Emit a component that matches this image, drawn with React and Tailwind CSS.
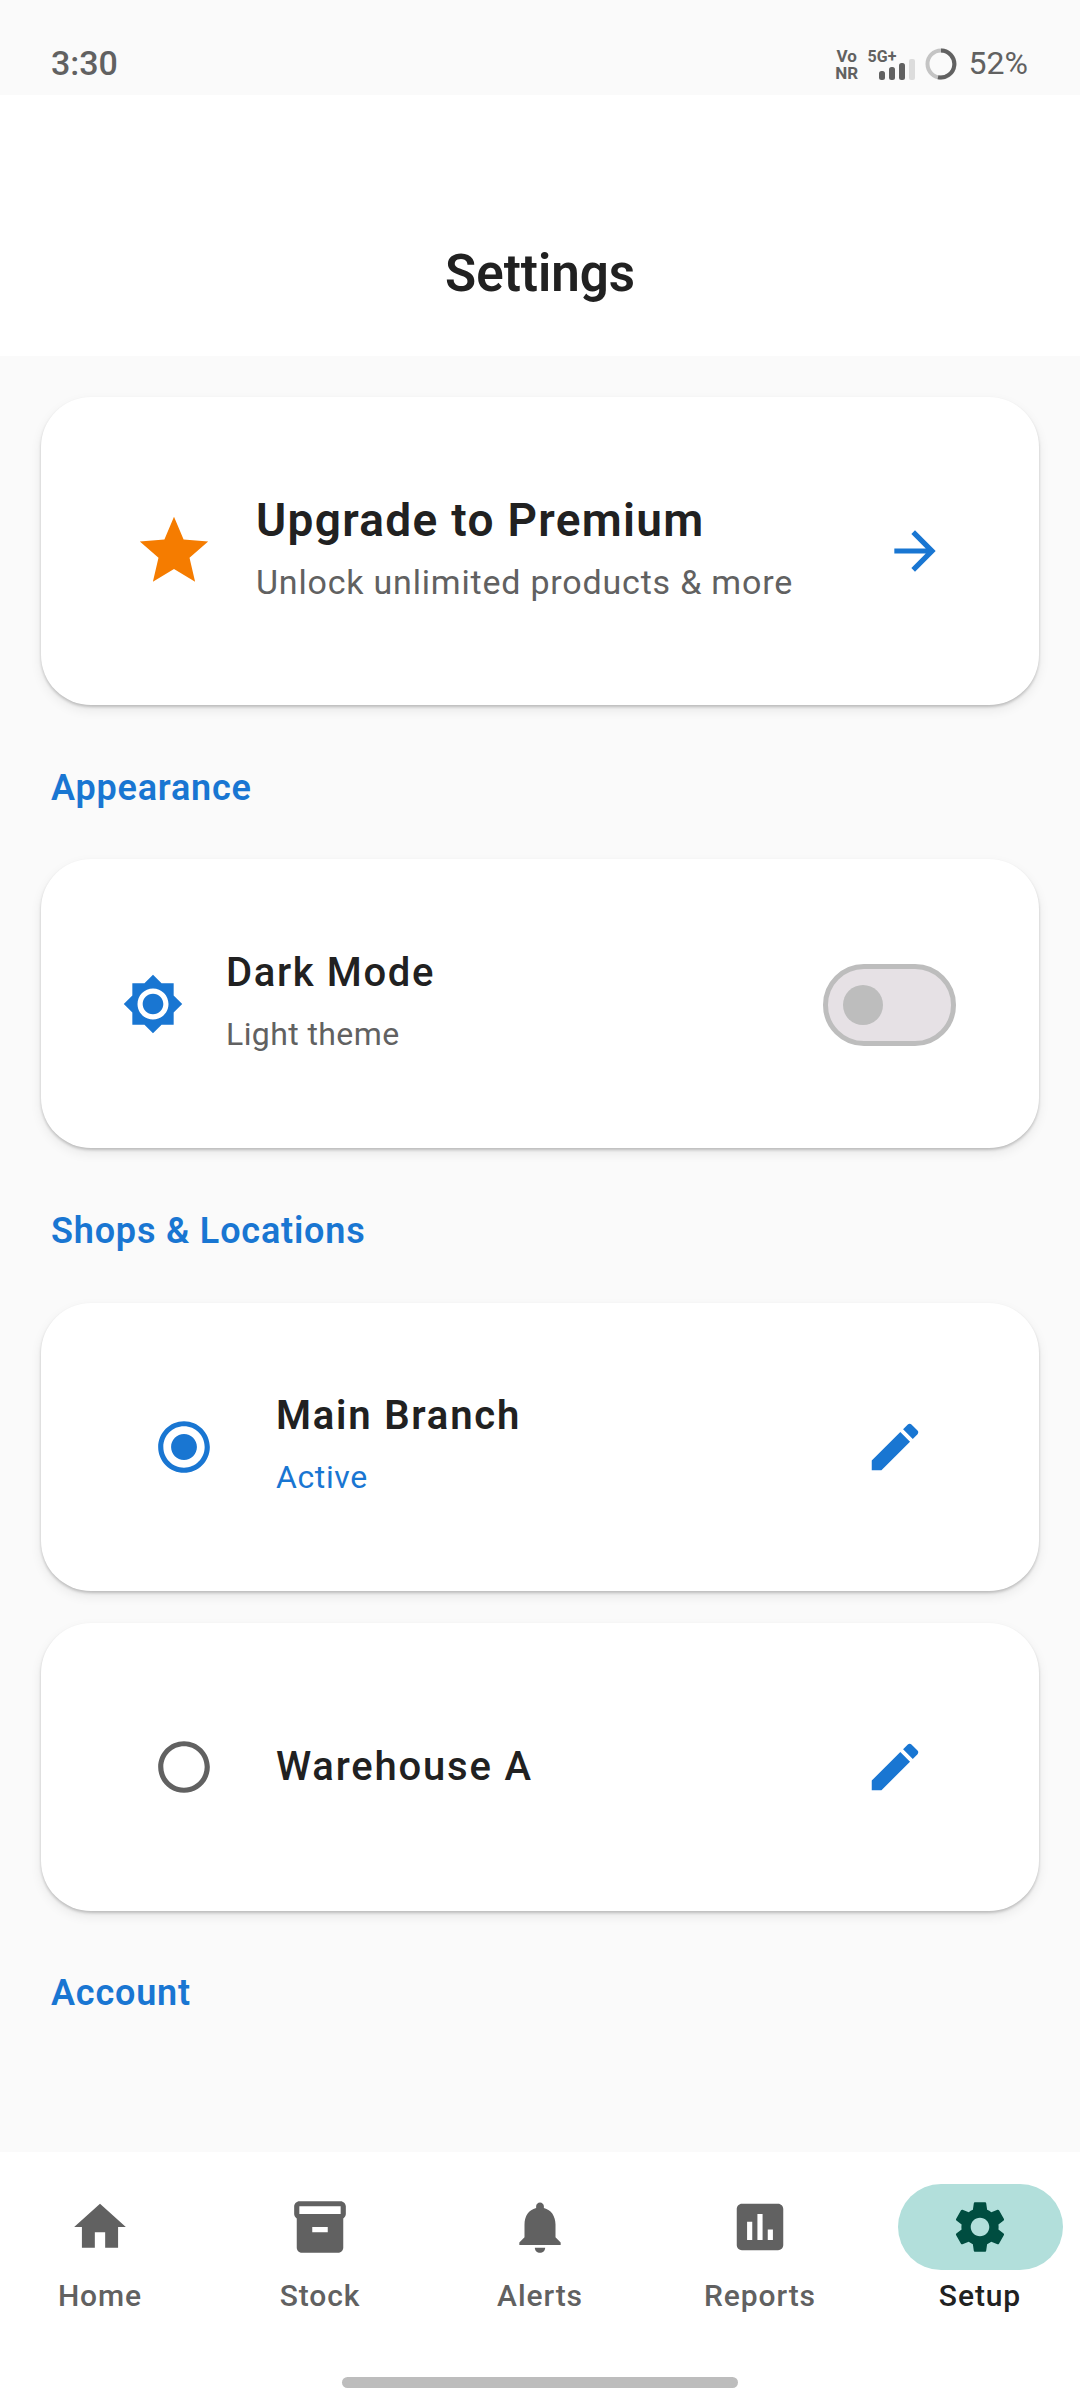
const paths = {
  star: 'M12 17.27L18.18 21l-1.64-7.03L22 9.24l-7.19-.61L12 2 9.19 8.63 2 9.24l5.46 4.73L5.82 21z',
  arrow: 'M12 4l-1.41 1.41L16.17 11H4v2h12.17l-5.58 5.59L12 20l8-8z',
  brightness: 'M20 8.69V4h-4.69L12 .69 8.69 4H4v4.69L.69 12 4 15.31V20h4.69L12 23.31 15.31 20H20v-4.69L23.31 12 20 8.69zM12 18c-3.31 0-6-2.69-6-6s2.69-6 6-6 6 2.69 6 6-2.69 6-6 6zm0-10c-2.21 0-4 1.79-4 4s1.79 4 4 4 4-1.79 4-4-1.79-4-4-4z',
  edit: 'M3 17.25V21h3.75L17.81 9.94l-3.75-3.75L3 17.25zM20.71 7.04c.39-.39.39-1.02 0-1.41l-2.34-2.34c-.39-.39-1.02-.39-1.41 0l-1.83 1.83 3.75 3.75 1.83-1.83z',
  radioOn: 'M12 7c-2.76 0-5 2.24-5 5s2.24 5 5 5 5-2.24 5-5-2.24-5-5-5zm0-5C6.48 2 2 6.48 2 12s4.48 10 10 10 10-4.48 10-10S17.52 2 12 2zm0 18c-4.42 0-8-3.58-8-8s3.58-8 8-8 8 3.58 8 8-3.58 8-8 8z',
  radioOff: 'M12 2C6.48 2 2 6.48 2 12s4.48 10 10 10 10-4.48 10-10S17.52 2 12 2zm0 18c-4.42 0-8-3.58-8-8s3.58-8 8-8 8 3.58 8 8-3.58 8-8 8z',
  home: 'M10 20v-6h4v6h5v-8h3L12 3 2 12h3v8z',
  stock: 'M20 2H4c-1 0-2 .9-2 2v3.01c0 .72.43 1.34 1 1.69V20c0 1.1 1.1 2 2 2h14c.9 0 2-.9 2-2V8.7c.57-.35 1-.97 1-1.69V4c0-1.1-1-2-2-2zm-5 12H9v-2h6v2zm5-7H4V4l16-.02V7z',
  bell: 'M12 22c1.1 0 2-.9 2-2h-4c0 1.1.89 2 2 2zm6-6v-5c0-3.07-1.64-5.64-4.5-6.32V4c0-.83-.67-1.5-1.5-1.5s-1.5.67-1.5 1.5v.68C7.63 5.36 6 7.92 6 11v5l-2 2v1h16v-1l-2-2z',
  reports: 'M19 3H5c-1.1 0-2 .9-2 2v14c0 1.1.9 2 2 2h14c1.1 0 2-.9 2-2V5c0-1.1-.9-2-2-2zM9 17H7v-7h2v7zm4 0h-2V7h2v10zm4 0h-2v-4h2v4z',
  settings: 'M19.14 12.94c.04-.3.06-.61.06-.94 0-.32-.02-.64-.07-.94l2.03-1.58c.18-.14.23-.41.12-.61l-1.92-3.32c-.12-.22-.37-.29-.59-.22l-2.39.96c-.5-.38-1.03-.7-1.62-.94l-.36-2.54c-.04-.24-.24-.41-.48-.41h-3.84c-.24 0-.43.17-.47.41l-.36 2.54c-.59.24-1.13.57-1.62.94l-2.39-.96c-.22-.08-.47 0-.59.22L2.74 8.87c-.12.21-.08.47.12.61l2.03 1.58c-.05.3-.09.63-.09.94s.02.64.07.94l-2.03 1.58c-.18.14-.23.41-.12.61l1.92 3.32c.12.22.37.29.59.22l2.39-.96c.5.38 1.03.7 1.62.94l.36 2.54c.05.24.24.41.48.41h3.84c.24 0 .44-.17.47-.41l.36-2.54c.59-.24 1.13-.56 1.62-.94l2.39.96c.22.08.47 0 .59-.22l1.92-3.32c.12-.22.07-.47-.12-.61l-2.01-1.58zM12 15.6c-1.98 0-3.6-1.62-3.6-3.6s1.62-3.6 3.6-3.6 3.6 1.62 3.6 3.6-1.62 3.6-3.6 3.6z',
};

function Icon({ name, className }) {
  return (
    <svg viewBox="0 0 24 24" fill="currentColor" className={className}>
      <path d={paths[name]} />
    </svg>
  );
}

function StatusBar() {
  return (
    <div className="h-[95px] shrink-0 bg-[#fafafa] flex items-start justify-between pt-[43px] pl-[51px] pr-[52px] text-[#616161]">
      <span className="text-[34px] leading-[40px] font-medium">3:30</span>
      <div className="flex items-start">
        <div className="flex flex-col items-center text-[17px] leading-[17px] font-bold mt-[5px] w-[24px]">
          <span>Vo</span>
          <span>NR</span>
        </div>
        <div className="relative w-[46px] h-[34px] ml-[9px] mt-[4px]">
          <span className="absolute left-[0px] top-[1px] text-[16px] leading-[17px] font-bold">5G+</span>
          <svg viewBox="0 0 36 21" className="absolute left-[11px] top-[12px] w-[36px] h-[21px]">
            <rect x="0" y="12" width="6" height="9" rx="2.5" fill="#616161" />
            <rect x="10" y="8" width="6" height="13" rx="2.5" fill="#616161" />
            <rect x="20" y="4" width="6" height="17" rx="2.5" fill="#616161" />
            <rect x="30" y="0" width="6" height="21" rx="2" fill="#dcdcdc" />
          </svg>
        </div>
        <svg viewBox="0 0 32 32" className="w-[32px] h-[32px] ml-[11px] mt-[5px]">
          <circle cx="16" cy="16" r="13.5" fill="none" stroke="#c4c4c4" strokeWidth="4" />
          <path d="M16 2.5 A13.5 13.5 0 1 1 13 29.2" fill="none" stroke="#616161" strokeWidth="4" />
        </svg>
        <span className="text-[32px] leading-[40px] ml-[12px]">52%</span>
      </div>
    </div>
  );
}

function Card({ className = '', children }) {
  return (
    <div className={`bg-white rounded-[50px] shadow-[0_2px_3px_rgba(0,0,0,0.2),0_5px_12px_rgba(0,0,0,0.08)] flex items-center ${className}`}>
      {children}
    </div>
  );
}

function SectionLabel({ children, className = '' }) {
  return (
    <div className={`pl-[10px] text-[36px] leading-[44px] font-semibold tracking-[0.8px] text-[#1976d2] ${className}`}>
      {children}
    </div>
  );
}

function ShopRow({ name, active, className }) {
  return (
    <Card className={`h-[288px] ${className}`}>
      <Icon name={active ? 'radioOn' : 'radioOff'} className={`w-[62px] h-[62px] ml-[112px] ${active ? 'text-[#1976d2]' : 'text-[#616161]'}`} />
      <div className={`ml-[61px] flex-1 ${active ? 'pb-[7px]' : ''}`}>
        <div className={`text-[40px] leading-[52px] tracking-[1.8px] text-[#212121] ${active ? 'font-semibold' : 'font-medium'}`}>{name}</div>
        {active && <div className="text-[32px] leading-[40px] mt-[15px] tracking-[0.6px] text-[#1976d2]">Active</div>}
      </div>
      <Icon name="edit" className="w-[62px] h-[62px] mr-[113px] text-[#1976d2]" />
    </Card>
  );
}

function NavItem({ icon, label, active }) {
  return (
    <div className="flex flex-col items-center">
      <div className={`w-[165px] h-[86px] rounded-full flex items-center justify-center ${active ? 'bg-[#b2dfdb]' : ''}`}>
        <Icon name={icon} className={`w-[62px] h-[62px] ${active ? 'text-[#004d40]' : 'text-[#616161]'}`} />
      </div>
      <span className={`mt-[6px] text-[30px] leading-[40px] font-medium tracking-[0.9px] ${active ? 'text-[#212121]' : 'text-[#616161]'}`}>{label}</span>
    </div>
  );
}

export default function App() {
  return (
    <div className="w-[1080px] h-[2408px] flex flex-col bg-[#fafafa] overflow-hidden font-['Roboto',sans-serif]">
      <StatusBar />
      <div className="h-[261px] shrink-0 bg-white flex items-end justify-center pb-[54px]">
        <h1 className="text-[51px] leading-[56px] font-semibold text-[#212121]">Settings</h1>
      </div>

      <main className="flex-1 px-[41px] pt-[41px]">
        <Card className="h-[308px]">
          <Icon name="star" className="w-[82px] h-[82px] ml-[92px] text-[#f57c00]" />
          <div className="ml-[41px] flex-1 pb-[9px]">
            <div className="text-[46px] leading-[56px] font-semibold tracking-[1.3px] text-[#212121]">Upgrade to Premium</div>
            <div className="text-[34px] leading-[40px] mt-[14px] tracking-[0.8px] text-[#616161]">Unlock unlimited products &amp; more</div>
          </div>
          <Icon name="arrow" className="w-[62px] h-[62px] mr-[93px] text-[#1976d2]" />
        </Card>

        <SectionLabel className="mt-[61px]">Appearance</SectionLabel>

        <Card className="h-[289px] mt-[49px]">
          <Icon name="brightness" className="w-[62px] h-[62px] ml-[81px] text-[#1976d2]" />
          <div className="ml-[42px] flex-1 pb-[7px]">
            <div className="text-[40px] leading-[52px] font-medium tracking-[1.65px] text-[#212121]">Dark Mode</div>
            <div className="text-[32px] leading-[40px] mt-[15px] tracking-[0.4px] text-[#616161]">Light theme</div>
          </div>
          <div className="w-[133px] h-[82px] mt-[3px] mr-[83px] rounded-full border-[5px] border-[#bdbdbd] bg-[#e6e1e5] flex items-center pl-[15px]">
            <div className="w-[40px] h-[40px] rounded-full bg-[#bdbdbd]" />
          </div>
        </Card>

        <SectionLabel className="mt-[61px]">Shops &amp; Locations</SectionLabel>

        <ShopRow name="Main Branch" active className="mt-[50px]" />
        <ShopRow name="Warehouse A" className="mt-[32px]" />

        <SectionLabel className="mt-[60px]">Account</SectionLabel>
      </main>

      <nav className="h-[256px] shrink-0 bg-white relative pt-[32px]">
        <div className="grid grid-cols-5 -mx-[10px]">
          <NavItem icon="home" label="Home" />
          <NavItem icon="stock" label="Stock" />
          <NavItem icon="bell" label="Alerts" />
          <NavItem icon="reports" label="Reports" />
          <NavItem icon="settings" label="Setup" active />
        </div>
        <div className="absolute bottom-[20px] left-[342px] w-[396px] h-[11px] rounded-full bg-[#bdbdbd]" />
      </nav>
    </div>
  );
}
